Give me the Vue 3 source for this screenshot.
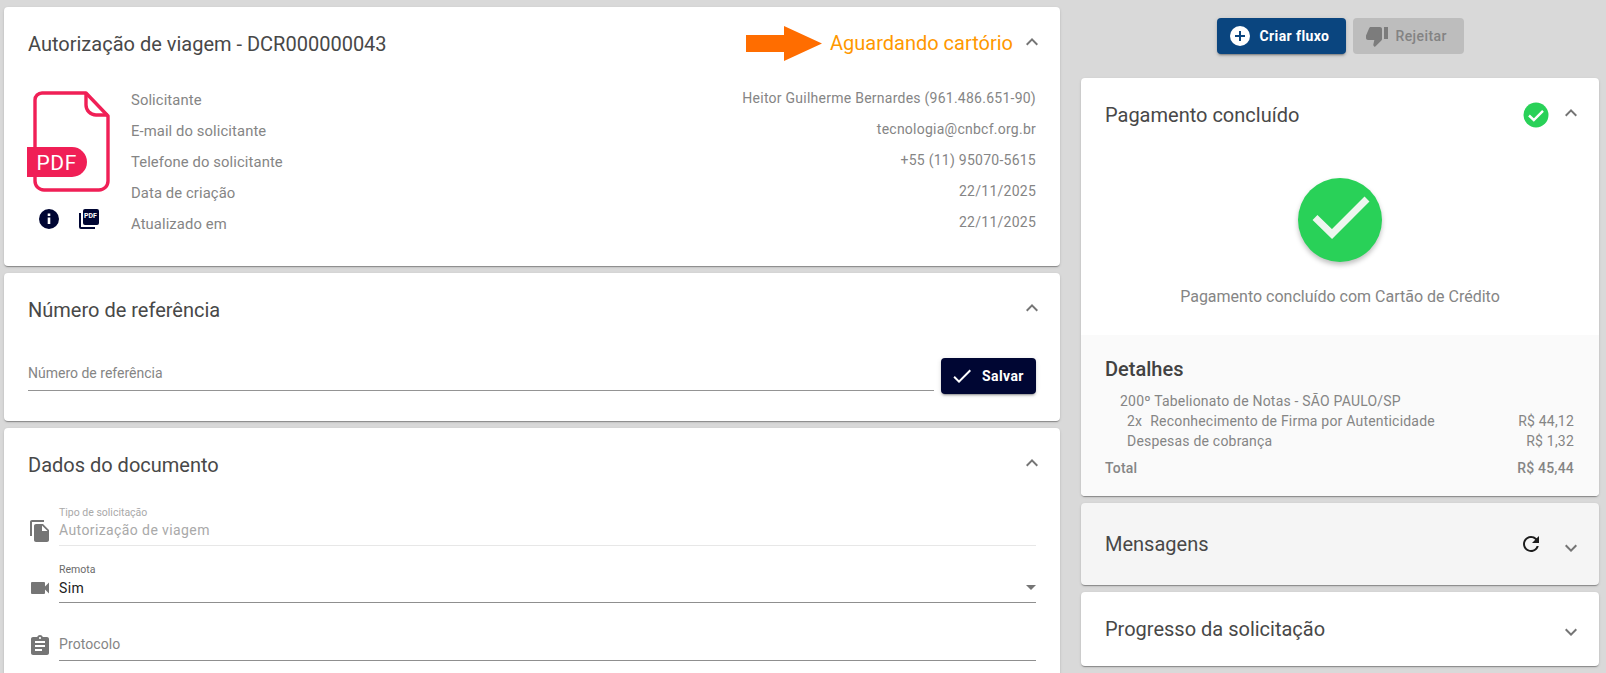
<script setup>
const labels = ['Solicitante', 'E-mail do solicitante', 'Telefone do solicitante', 'Data de criação', 'Atualizado em']
const values = ['Heitor Guilherme Bernardes (961.486.651-90)', 'tecnologia@cnbcf.org.br', '+55 (11) 95070-5615', '22/11/2025', '22/11/2025']
</script>

<template>
  <div class="page">
    <main class="left">
      <section class="card c1">
        <header class="head">
          <h2>Autorização de viagem - DCR000000043</h2>
          <div class="status">
            <svg class="arrow" width="76" height="35" viewBox="0 0 76 35"><path d="M0 9H38V0L76 17.500 38 35V26H0Z" fill="#ff6d00"/></svg>
            <span>Aguardando cartório</span>
          </div>
          <svg class="chev" viewBox="0 0 24 24"><path d="M7.41 15.41 12 10.83l4.59 4.58L18 14l-6-6-6 6z"/></svg>
        </header>
        <div class="doc">
          <div class="doc-side">
            <svg class="pdf" width="84" height="102" viewBox="0 0 84 102">
              <path d="M15 2H59L81 25V90a9 9 0 0 1-9 9H17a9 9 0 0 1-9-9V9a7 7 0 0 1 7-7Z" fill="none" stroke="#f01f56" stroke-width="3.4" stroke-linejoin="round"/>
              <path d="M59 2V14a10 10 0 0 0 10 10H81" fill="none" stroke="#f01f56" stroke-width="3.4"/>
              <path d="M0 56H45a15 15 0 0 1 0 30H0Z" fill="#f01f56"/>
              <text x="9.500" y="78.500" class="pdf-text">PDF</text>
            </svg>
            <div class="doc-icons">
              <svg width="24" height="24" viewBox="0 0 24 24" fill="#000633"><path d="M12 2a10 10 0 1 0 0 20 10 10 0 0 0 0-20Zm1.300 15h-2.600v-6.500h2.600Zm0-8h-2.600V6.600h2.600Z"/></svg>
              <svg width="24" height="24" viewBox="0 0 24 24" fill="#000633"><path d="M4 6H2v14a2 2 0 0 0 2 2h14v-2H4Z"/><path d="M8 2h12a2 2 0 0 1 2 2v12a2 2 0 0 1-2 2H8a2 2 0 0 1-2-2V4a2 2 0 0 1 2-2Z"/><text x="7" y="11" class="mini">PDF</text></svg>
            </div>
          </div>
          <ul class="labels"><li v-for="l in labels" :key="l">{{ l }}</li></ul>
          <ul class="values"><li v-for="v in values" :key="v">{{ v }}</li></ul>
        </div>
      </section>

      <section class="card c2">
        <header class="head">
          <h2>Número de referência</h2>
          <svg class="chev" viewBox="0 0 24 24"><path d="M7.41 15.41 12 10.83l4.59 4.58L18 14l-6-6-6 6z"/></svg>
        </header>
        <div class="ref">
          <div class="ref-field">Número de referência</div>
          <button class="salvar">
            <svg width="24" height="24" viewBox="0 0 24 24" fill="#fff"><path d="M9 16.170 4.830 12l-1.420 1.410L9 19 21 7l-1.410-1.410z"/></svg>
            <span>Salvar</span>
          </button>
        </div>
      </section>

      <section class="card c3">
        <header class="head">
          <h2>Dados do documento</h2>
          <svg class="chev" viewBox="0 0 24 24"><path d="M7.41 15.41 12 10.83l4.59 4.58L18 14l-6-6-6 6z"/></svg>
        </header>
        <div class="field f-disabled">
          <svg class="ficon" viewBox="0 0 24 24"><path d="M16 1H4c-1.100 0-2 .9-2 2v14h2V3h12V1Zm-1 4 6 6v10c0 1.100-.9 2-2 2H7.990C6.890 23 6 22.100 6 21l.01-14c0-1.100.89-2 1.990-2h7Zm-1 7h5.500L14 6.500V12Z"/></svg>
          <div class="fbody">
            <small>Tipo de solicitação</small>
            <p>Autorização de viagem</p>
          </div>
        </div>
        <div class="field f-select">
          <svg class="ficon" viewBox="0 0 24 24"><path d="M17 10.500V7a1 1 0 0 0-1-1H4a1 1 0 0 0-1 1v10a1 1 0 0 0 1 1h12a1 1 0 0 0 1-1v-3.500l4 4v-11l-4 4Z"/></svg>
          <div class="fbody">
            <small>Remota</small>
            <p>Sim</p>
            <i class="caret"></i>
          </div>
        </div>
        <div class="field f-plain">
          <svg class="ficon" viewBox="0 0 24 24"><path d="M19 3h-4.180C14.400 1.840 13.300 1 12 1s-2.400.84-2.820 2H5c-1.100 0-2 .9-2 2v14c0 1.100.9 2 2 2h14c1.100 0 2-.9 2-2V5c0-1.100-.9-2-2-2Zm-7 0c.55 0 1 .45 1 1s-.45 1-1 1-1-.45-1-1 .45-1 1-1Zm2 14H7v-2h7v2Zm3-4H7v-2h10v2Zm0-4H7V7h10v2Z"/></svg>
          <div class="fbody"><p>Protocolo</p></div>
        </div>
      </section>
    </main>

    <aside class="right">
      <div class="actions">
        <button class="btn primary">
          <svg width="24" height="24" viewBox="0 0 24 24"><circle cx="12" cy="12" r="10" fill="#fff"/><path d="M11 7h2v4h4v2h-4v4h-2v-4H7v-2h4z" fill="#0a457f"/></svg>
          <span>Criar fluxo</span>
        </button>
        <button class="btn disabled">
          <svg width="24" height="24" viewBox="0 0 24 24" fill="#7c7c7c"><path d="M15 3H6c-.83 0-1.540.5-1.840 1.220l-3.020 7.050c-.09.23-.14.47-.14.73v2c0 1.100.9 2 2 2h6.310l-.95 4.570-.03.32c0 .41.17.79.44 1.060L9.830 23l6.590-6.590c.36-.36.58-.86.58-1.410V5c0-1.100-.9-2-2-2Zm4 0v12h4V3h-4Z"/></svg>
          <span>Rejeitar</span>
        </button>
      </div>

      <section class="card pay">
        <header class="head hpay">
          <h2>Pagamento concluído</h2>
          <svg class="okmini" width="26" height="26" viewBox="0 0 26 26"><circle cx="13" cy="13" r="12.500" fill="#29d158"/><path d="M6 13.500l4.800 4.500L20 8.800" fill="none" stroke="#fff" stroke-width="2.400"/></svg>
          <svg class="chev" viewBox="0 0 24 24"><path d="M7.41 15.41 12 10.83l4.59 4.58L18 14l-6-6-6 6z"/></svg>
        </header>
        <div class="ok">
          <div class="okbig">
            <svg width="84" height="84" viewBox="0 0 84 84"><path d="M17 39.500 34 56 69 21" fill="none" stroke="#eef6ef" stroke-width="7"/></svg>
          </div>
          <p>Pagamento concluído com Cartão de Crédito</p>
        </div>
        <div class="details">
          <h3>Detalhes</h3>
          <div class="notary">200º Tabelionato de Notas - SÃO PAULO/SP</div>
          <div class="line"><span><b>2x</b>Reconhecimento de Firma por Autenticidade</span><span>R$ 44,12</span></div>
          <div class="line"><span>Despesas de cobrança</span><span>R$ 1,32</span></div>
          <div class="total"><span>Total</span><span>R$ 45,44</span></div>
        </div>
      </section>

      <section class="card msg">
        <h2>Mensagens</h2>
        <svg class="refresh" width="24" height="24" viewBox="0 0 24 24"><path d="M17.650 6.350A7.958 7.958 0 0 0 12 4c-4.420 0-7.990 3.580-7.990 8s3.570 8 7.990 8c3.730 0 6.840-2.550 7.730-6h-2.080A5.990 5.990 0 0 1 12 18c-3.310 0-6-2.690-6-6s2.690-6 6-6c1.660 0 3.140.69 4.220 1.780L13 11h7V4l-2.350 2.350Z" fill="#1d1d1d"/></svg>
        <svg class="chev" viewBox="0 0 24 24"><path d="M7.41 8.590 12 13.170l4.590-4.580L18 10l-6 6-6-6z"/></svg>
      </section>

      <section class="card prog">
        <h2>Progresso da solicitação</h2>
        <svg class="chev" viewBox="0 0 24 24"><path d="M7.41 8.590 12 13.170l4.590-4.580L18 10l-6 6-6-6z"/></svg>
      </section>
    </aside>
  </div>
</template>

<style scoped>
.page {
  display: flex;
  align-items: flex-start;
  height: 673px;
  overflow: hidden;
  background: #d9d9d9;
  font-family: Roboto, sans-serif;
  color: #858585;
  box-sizing: border-box;
  padding: 7px 7px 0 4px;
  gap: 21px;
}
.left { width: 1056px; flex: none; display: flex; flex-direction: column; gap: 7px; }
.right { flex: 1; display: flex; flex-direction: column; gap: 7px; padding-top: 11px; }
.card {
  background: #fff;
  border-radius: 4px;
  box-shadow: 0 2px 1px -1px rgba(0,0,0,.2), 0 1px 1px 0 rgba(0,0,0,.14), 0 1px 3px 0 rgba(0,0,0,.12);
  box-sizing: border-box;
}
h2 { margin: 0; font-size: 20px; font-weight: 400; color: #484848; line-height: 28px; }
ul { list-style: none; margin: 0; padding: 0; }
.head { display: flex; align-items: center; height: 72px; padding: 0 16px 0 24px; }
.head h2 { flex: 1; }
.left .head h2 { margin-top: 2px; }
.left .head .chev { margin-top: -2px; }
.chev { width: 24px; height: 24px; fill: #757575; flex: none; }
.c1 { height: 259px; }
.status { display: flex; align-items: center; color: #ff9800; font-size: 20px; margin-right: 7px; }
.arrow { margin-right: 8px; }
.doc { display: flex; padding: 0 24px 0 23px; }
.doc-side { width: 104px; flex: none; margin-top: 12px; }
.pdf { display: block; }
.pdf-text { font: 400 21px Roboto, sans-serif; fill: #fff; letter-spacing: .6px; }
.doc-icons { display: flex; gap: 16px; padding: 14px 0 0 10px; }
.mini { font: 700 7px Roboto, sans-serif; fill: #fff; }
.labels { margin-top: 6px; font-size: 14.800px; letter-spacing: .1px; }
.labels li { height: 31px; line-height: 31px; }
.values { margin-left: auto; margin-top: 4px; text-align: right; font-size: 14px; letter-spacing: .25px; }
.values li { height: 31px; line-height: 31px; }
.c2 { height: 148px; }
.ref { display: flex; padding: 0 24px; align-items: flex-start; gap: 7px; }
.ref-field { flex: 1; height: 46px; box-sizing: border-box; padding-top: 18px; border-bottom: 1px solid #949494; font-size: 14px; line-height: 20px; }
.salvar {
  width: 95px; height: 36px; margin-top: 13px;
  background: #000633; color: #fff; border: 0; border-radius: 4px;
  display: flex; align-items: center; gap: 8px; padding: 0 0 0 9px;
  font: 700 14px Roboto, sans-serif; letter-spacing: .4px;
  box-shadow: 0 3px 1px -2px rgba(0,0,0,.2), 0 2px 2px 0 rgba(0,0,0,.14), 0 1px 5px 0 rgba(0,0,0,.12);
}
.c3 { height: 300px; }
.field { display: flex; padding: 0 24px; align-items: flex-start; gap: 7px; }
.ficon { width: 24px; height: 24px; fill: #757575; flex: none; margin-top: 14px; }
.fbody { flex: 1; position: relative; }
.fbody small { display: block; font-size: 10.500px; line-height: 15px; }
.fbody p { margin: 0; font-size: 14px; line-height: 20px; }
.f-disabled { margin-top: 5px; }
.f-disabled .fbody { border-bottom: 1px solid #e7e7e7; padding-bottom: 5px; color: #a9a9a9; }
.f-disabled p { letter-spacing: .4px; }
.f-select { margin-top: 16px; }
.f-select .fbody { border-bottom: 1px solid #8f8f8f; padding-bottom: 4px; }
.f-select .fbody p { color: #212121; letter-spacing: .4px; }
.f-select .fbody small { color: #6a6a6a; margin-bottom: 1px; }
.caret { position: absolute; right: 0; top: 23px; border: 5px solid transparent; border-top-color: #757575; border-bottom: 0; }
.f-plain { margin-top: 31px; }
.f-plain .ficon { margin-top: 0; }
.f-plain .fbody { border-bottom: 1px solid #8f8f8f; padding-bottom: 6px; letter-spacing: .1px; }
.actions { display: flex; justify-content: center; gap: 7px; height: 36px; margin-bottom: 17px; }
.btn {
  height: 36px; border: 0; border-radius: 4px; padding: 0; display: flex; align-items: center;
  font: 700 14px Roboto, sans-serif; letter-spacing: .4px;
}
.primary { width: 129px; padding-left: 11px; gap: 8px; background: #0a457f; color: #fff; box-shadow: 0 3px 1px -2px rgba(0,0,0,.2), 0 2px 2px 0 rgba(0,0,0,.14), 0 1px 5px 0 rgba(0,0,0,.12); }
.disabled { width: 111px; padding-left: 12px; gap: 7px; background: #bdbdbd; color: #838383; font-weight: 500; }
.pay { height: 418px; overflow: hidden; display: flex; flex-direction: column; }
.hpay { height: 73px; flex: none; }
.hpay .chev { margin-bottom: 3px; }
.okmini { margin-right: 10px; margin-top: 1px; }
.ok { height: 184px; flex: none; text-align: center; }
.okbig { width: 84px; height: 84px; border-radius: 50%; background: #29d158; margin: 27px auto 0; box-shadow: 0 3px 5px rgba(0,0,0,.25); }
.okbig svg { display: block; }
.ok p { margin: 23px 0 0; font-size: 16px; line-height: 24px; }
.details { flex: 1; background: #fafafa; padding: 22px 25px 0 24px; font-size: 14px; letter-spacing: .2px; }
.details h3 { margin: 0 0 10px; font-size: 20px; font-weight: 500; color: #424242; line-height: 24px; letter-spacing: 0; }
.notary { padding-left: 15px; line-height: 20px; }
.line { display: flex; justify-content: space-between; padding-left: 22px; line-height: 20px; }
.line b { font-weight: 400; margin-right: 8px; }
.total { display: flex; justify-content: space-between; font-weight: 500; line-height: 20px; margin-top: 7px; }
.msg, .prog { display: flex; align-items: center; padding: 0 16px 0 24px; }
.msg h2, .prog h2 { flex: 1; }
.msg { height: 82px; background: #f5f5f5; }
.refresh { margin-right: 16px; }
.msg .chev { margin-top: 7px; }
.prog { height: 74px; }
.prog .chev { margin-top: 6px; }
</style>

<style>
html, body { margin: 0; background: #d9d9d9; overflow: hidden; }
</style>
